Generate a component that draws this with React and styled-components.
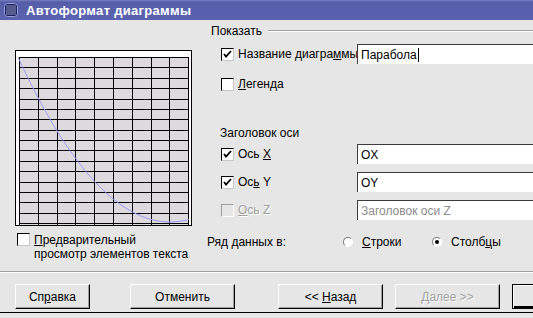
import React from 'react'
import styled, { createGlobalStyle, css } from 'styled-components'

const GlobalStyle = createGlobalStyle`
  html, body {
    margin: 0;
    padding: 0;
    background: #e6e6e6;
  }
  body {
    font-family: 'Liberation Sans', Arial, sans-serif;
    font-size: 12px;
    color: #000;
  }
`

const Window = styled.div`
  width: 533px;
  height: 318px;
  overflow: hidden;
  background: #e6e6e6;
  display: flex;
  flex-direction: column;
`

const TitleBar = styled.div`
  height: 20px;
  flex: none;
  display: flex;
  align-items: center;
  gap: 8px;
  padding-left: 4px;
  background: linear-gradient(#767dc2 0, #565ea9 2px, #5b63b1 100%);
  color: #fff;
  font-weight: 700;
  font-size: 13px;
  letter-spacing: 0.3px;
`

const Body = styled.div`
  height: 251px;
  flex: none;
  display: flex;
`

const LeftPanel = styled.div`
  width: 207px;
  flex: none;
  padding: 30px 0 0 15px;
  box-sizing: border-box;
  display: flex;
  flex-direction: column;
`

const Preview = styled.div`
  width: 177px;
  height: 176px;
  box-sizing: border-box;
  border: 1px solid #000;
  background: #fff;
  svg {
    display: block;
  }
`

const PreviewOption = styled.div`
  margin-top: 7px;
  margin-left: 2px;
  display: flex;
  align-items: flex-start;
  gap: 4px;
  line-height: 14px;
`

const RightPanel = styled.div`
  flex: 1;
  padding: 4px 0 0 0;
  display: flex;
  flex-direction: column;
`

const GroupHeader = styled.div`
  height: 14px;
  line-height: 14px;
  padding-left: 4px;
  display: flex;
  align-items: center;
  gap: 6px;
  &::after {
    content: '';
    flex: 1;
    height: 0;
    border-top: 1px solid #a0a0a0;
    border-bottom: 1px solid #fff;
  }
`

const SubHeader = styled.div`
  height: 14px;
  line-height: 14px;
  padding-left: 13px;
  margin-top: ${p => p.$top}px;
`

const Row = styled.div`
  height: 20px;
  display: flex;
  align-items: center;
  margin-top: ${p => p.$top}px;
  padding-left: 14px;
`

const Label = styled.div`
  width: 119px;
  padding-left: 4px;
  flex: none;
  white-space: nowrap;
  overflow: hidden;
  color: ${p => (p.$disabled ? '#a0a0a0' : '#000')};
  ${p =>
    p.$disabled &&
    css`
      text-shadow: 1px 1px 0 #fff;
    `}
`

const TextField = styled.div`
  width: 200px;
  height: 20px;
  flex: none;
  box-sizing: border-box;
  border-style: solid;
  border-width: 1px 0 0 1px;
  border-color: #3c3c3c;
  background: #fff;
  padding-left: 3px;
  line-height: 18px;
  color: ${p => (p.$disabled ? '#8c8c8c' : '#000')};
  display: flex;
  align-items: center;
`

const Caret = styled.span`
  display: inline-block;
  width: 1px;
  height: 14px;
  background: #000;
  margin-left: 1px;
`

const Box = styled.span`
  width: 13px;
  height: 13px;
  flex: none;
  box-sizing: border-box;
  border-style: solid;
  border-width: 1px;
  border-color: ${p => (p.$disabled ? '#a0a0a0 #fff #fff #a0a0a0' : '#000 #c8c8c8 #c8c8c8 #000')};
  background: ${p => (p.$disabled ? '#e6e6e6' : '#fff')};
  display: flex;
  align-items: center;
  justify-content: center;
`

const SeriesRow = styled.div`
  height: 16px;
  margin-top: 14px;
  display: flex;
  align-items: center;
`

const SeriesLabel = styled.div`
  width: 136px;
  flex: none;
`

const RadioOption = styled.div`
  display: flex;
  align-items: center;
  gap: 9px;
  width: 89px;
  flex: none;
`

const RadioDot = styled.span`
  width: 10px;
  height: 10px;
  flex: none;
  border-radius: 50%;
  box-sizing: border-box;
  border: 1px solid;
  border-color: #7a7a7a #fff #fff #7a7a7a;
  background: #fff;
  display: flex;
  align-items: center;
  justify-content: center;
  &::after {
    content: '';
    width: 4px;
    height: 4px;
    border-radius: 50%;
    background: ${p => (p.$on ? '#000' : 'transparent')};
  }
`

const Separator = styled.div`
  height: 0;
  flex: none;
  border-top: 1px solid #a0a0a0;
  border-bottom: 1px solid #fff;
`

const ButtonRow = styled.div`
  display: flex;
  padding: 11px 0 0 15px;
  height: 25px;
  flex: none;
`

const Button = styled.div`
  width: ${p => p.$w}px;
  height: 25px;
  margin-right: ${p => p.$gap}px;
  flex: none;
  box-sizing: border-box;
  border-style: solid;
  border-width: 1px;
  border-color: #fff #000 #000 #fff;
  box-shadow: inset -1px -1px 0 #a0a0a0;
  display: flex;
  align-items: center;
  justify-content: center;
  color: ${p => (p.$disabled ? '#a0a0a0' : '#000')};
  ${p =>
    p.$disabled &&
    css`
      text-shadow: 1px 1px 0 #fff;
    `}
  ${p =>
    p.$default &&
    css`
      border: 1px solid #000;
      box-shadow: inset 1px 1px 0 #fff, inset -2px -2px 0 #000;
    `}
`

const BottomEdge = styled.div`
  margin-top: 3px;
  height: 1px;
  background: #000;
`

const CheckMark = () => (
  <svg width="9" height="9" viewBox="0 0 9 9">
    <path d="M1 4 L3 6.5 L8 1" fill="none" stroke="#000" strokeWidth="1.8" />
  </svg>
)

const CheckBox = ({ checked, disabled }) => (
  <Box $disabled={disabled}>{checked && <CheckMark />}</Box>
)

const AppIcon = () => (
  <svg width="14" height="14" viewBox="0 0 14 14">
    <rect x="0.5" y="0.5" width="13" height="13" rx="3" fill="#1c2466" stroke="#9aa0d8" />
    {[3, 5, 7, 9, 11].map(x =>
      [3, 5, 7, 9, 11].map(y => (
        <rect key={x + '-' + y} x={x - 0.5} y={y - 0.5} width="1" height="1" fill="#fff" />
      ))
    )}
  </svg>
)

// preview grid: 9 columns x 16 rows, parabola y = a(x - 154)^2 flipped
const ChartPreview = () => {
  const vx = Array.from({ length: 10 }, (_, i) => Math.round(3 + i * 18.8) + 0.5)
  const hy = Array.from({ length: 17 }, (_, j) => Math.round(6 + j * 10.375) + 0.5)
  const curve = []
  for (let x = 2; x <= 173; x += 1) {
    curve.push(`${x},${(171 - 0.00714 * (x - 154) * (x - 154)).toFixed(1)}`)
  }
  return (
    <Preview>
      <svg width="175" height="174" viewBox="0 0 175 174">
        <rect x="3" y="6" width="170" height="168" fill="#ddd9dd" />
        <g shapeRendering="crispEdges">
          {vx.map(x => (
            <line key={'v' + x} x1={x} y1="6" x2={x} y2="174" stroke="#000" strokeWidth="1" />
          ))}
          {hy.map(y => (
            <line key={'h' + y} x1="3" y1={y} x2="173" y2={y} stroke="#000" strokeWidth="1" />
          ))}
        </g>
        <polyline points={curve.join(' ')} fill="none" stroke="#9a9aff" strokeWidth="1" />
      </svg>
    </Preview>
  )
}

export default function App() {
  return (
    <Window>
      <GlobalStyle />
      <TitleBar>
        <AppIcon />
        Автоформат диаграммы
      </TitleBar>
      <Body>
        <LeftPanel>
          <ChartPreview />
          <PreviewOption>
            <CheckBox />
            <div>
              <u>П</u>редварительный
              <br />
              просмотр элементов текста
            </div>
          </PreviewOption>
        </LeftPanel>
        <RightPanel>
          <GroupHeader>Показать</GroupHeader>
          <Row $top={6}>
            <CheckBox checked />
            <Label>
              Название диагра<u>м</u>мы
            </Label>
            <TextField>
              Парабола
              <Caret />
            </TextField>
          </Row>
          <Row $top={10}>
            <CheckBox />
            <Label>
              <u>Л</u>егенда
            </Label>
          </Row>
          <SubHeader $top={32}>Заголовок оси</SubHeader>
          <Row $top={4}>
            <CheckBox checked />
            <Label>
              Ось <u>X</u>
            </Label>
            <TextField>OX</TextField>
          </Row>
          <Row $top={8}>
            <CheckBox checked />
            <Label>
              Ос<u>ь</u> Y
            </Label>
            <TextField>OY</TextField>
          </Row>
          <Row $top={8}>
            <CheckBox disabled />
            <Label $disabled>
              <u>О</u>сь Z
            </Label>
            <TextField $disabled>Заголовок оси Z</TextField>
          </Row>
          <SeriesRow>
            <SeriesLabel>Ряд данных в:</SeriesLabel>
            <RadioOption>
              <RadioDot />
              <span>
                <u>С</u>троки
              </span>
            </RadioOption>
            <RadioOption>
              <RadioDot $on />
              <span>
                Столб<u>ц</u>ы
              </span>
            </RadioOption>
          </SeriesRow>
        </RightPanel>
      </Body>
      <Separator />
      <ButtonRow>
        <Button $w={75} $gap={40}>
          <span>
            Сп<u>р</u>авка
          </span>
        </Button>
        <Button $w={105} $gap={43}>
          Отменить
        </Button>
        <Button $w={105} $gap={12}>
          <span>
            &lt;&lt; <u>Н</u>азад
          </span>
        </Button>
        <Button $w={105} $gap={12} $disabled>
          <span>
            <u>Д</u>алее &gt;&gt;
          </span>
        </Button>
        <Button $w={105} $gap={0} $default />
      </ButtonRow>
      <BottomEdge />
    </Window>
  )
}
